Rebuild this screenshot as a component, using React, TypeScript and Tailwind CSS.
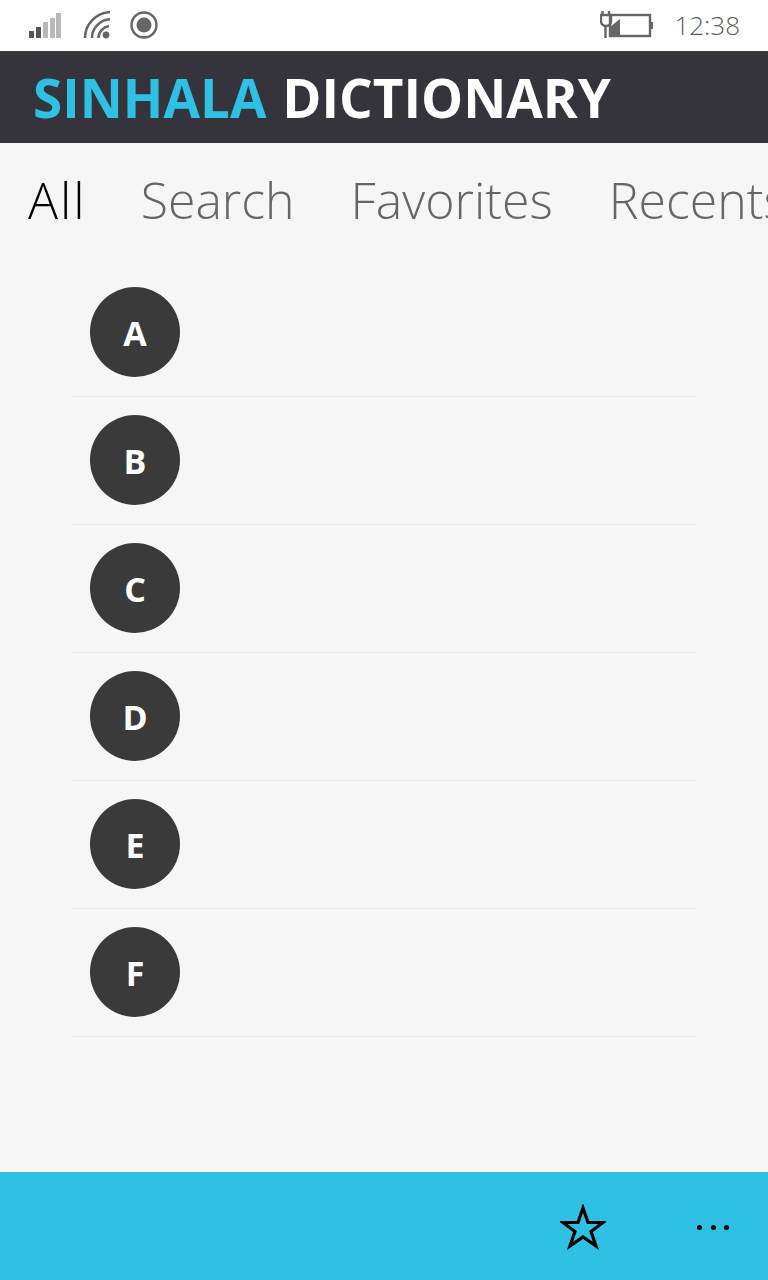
const letters = ["A", "B", "C", "D", "E", "F"];

function StatusBar() {
  return (
    <div className="h-[51px] pb-[2px] bg-white flex items-center text-[#5c5c5c]">
      {/* signal */}
      <svg width="34" height="26" viewBox="0 0 34 26" className="ml-[28px]">
        <rect x="1" y="19" width="5" height="7" fill="#555555" />
        <rect x="8" y="15" width="5" height="11" fill="#555555" />
        <rect x="15" y="10" width="5" height="16" fill="#b8b8b8" />
        <rect x="22" y="6" width="5" height="20" fill="#b8b8b8" />
        <rect x="28" y="1" width="5" height="25" fill="#b8b8b8" />
      </svg>
      {/* wifi */}
      <svg width="30" height="28" viewBox="0 0 30 28" className="ml-[21px]" fill="none" stroke="#666666" strokeWidth="2.5">
        <path d="M2 27 C2 13 13 2 27 1" />
        <path d="M9 27 C9 17 17 9 27 8" />
        <path d="M15.500 27 C15.500 21 20 16 26 15" />
        <circle cx="23" cy="24" r="3.400" fill="#666666" stroke="none" />
      </svg>
      {/* recording */}
      <svg width="28" height="28" viewBox="0 0 28 28" className="ml-[17px]">
        <circle cx="14" cy="14" r="12.500" fill="none" stroke="#666666" strokeWidth="2.400" />
        <circle cx="14" cy="14" r="7.500" fill="#666666" />
      </svg>
      <div className="flex-1" />
      {/* battery charging */}
      <svg width="53" height="28" viewBox="0 0 53 28" className="mr-[21px]" fill="none">
        <path d="M2.500 0 V4 M9 0 V4 M5.500 15 V27" stroke="#666666" strokeWidth="2.400" />
        <path d="M1 4 H11 V10 C11 13 9 15 6 15 C3 15 1 13 1 10 Z" stroke="#666666" strokeWidth="2.400" />
        <rect x="10" y="4" width="40" height="21" stroke="#666666" strokeWidth="2.400" />
        <path d="M10 24 V16 L20 8 V24 Z" fill="#666666" />
        <rect x="50" y="11" width="3" height="7" fill="#666666" />
      </svg>
      <span className="mr-[28px] text-[26px] leading-none font-light font-['Open_Sans',sans-serif]">12:38</span>
    </div>
  );
}

export default function App() {
  return (
    <div className="w-[768px] h-[1280px] flex flex-col bg-[#f6f6f6] overflow-hidden">
      <StatusBar />

      {/* Header */}
      <header className="h-[92px] pt-[1px] bg-[#35343d] flex items-center pl-[33px]">
        <h1 className="text-[53px] leading-none font-bold whitespace-nowrap [word-spacing:2px] font-['Open_Sans',sans-serif] text-white">
          <span className="text-[#2fc1e4]">SINHALA</span> DICTIONARY
        </h1>
      </header>

      {/* Tabs */}
      <nav className="h-[126px] flex gap-[56px] pl-[28px] pt-[26px] overflow-hidden whitespace-nowrap text-[50px] leading-[62px] font-light font-['Open_Sans',sans-serif] text-[#666666]">
        <span className="text-black tracking-[2px] mr-[-2px]">All</span>
        <span>Search</span>
        <span>Favorites</span>
        <span>Recents</span>
      </nav>

      {/* Letters */}
      <main className="flex-1 mx-[72px]">
        {letters.map((letter) => (
          <div key={letter} className="h-[128px] pl-[18px] pt-[18px] border-b border-[#ebebe9]">
            <div className="w-[90px] h-[90px] pt-[2px] rounded-full bg-[#3a3a3a] flex items-center justify-center text-white text-[34px] font-bold font-['Open_Sans',sans-serif]">
              {letter}
            </div>
          </div>
        ))}
      </main>

      {/* App bar */}
      <footer className="h-[108px] bg-[#2fc1e4] flex items-start">
        <div className="flex-1" />
        <svg width="46" height="46" viewBox="0 0 46 46" className="mt-[32px] mr-[91px]" fill="none" stroke="#000000" strokeWidth="3.200">
          <path d="M23 4 L28 18.500 H43 L31 27.500 L36 42 L23 33 L10 42 L15 27.500 L3 18.500 H18 Z" />
        </svg>
        <div className="mt-[53px] mr-[39px] flex gap-[8.5px]">
          <div className="w-[5px] h-[5px] rounded-full bg-black" />
          <div className="w-[5px] h-[5px] rounded-full bg-black" />
          <div className="w-[5px] h-[5px] rounded-full bg-black" />
        </div>
      </footer>
    </div>
  );
}
